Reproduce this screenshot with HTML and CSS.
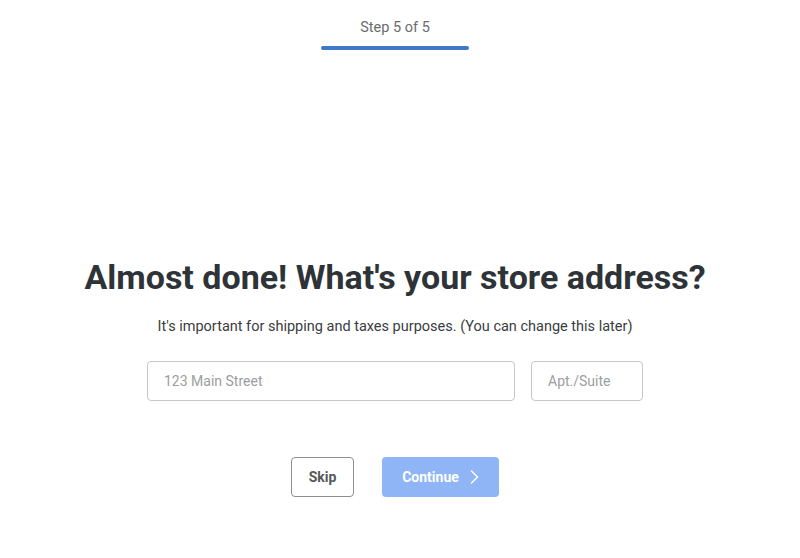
FILE: index.html
```html
<!DOCTYPE html>
<html>
<head>
<meta charset="utf-8">
<link rel="stylesheet" href="styles.css">
</head>
<body>
<div class="page">
  <header class="progress">
    <div class="step">Step 5 of 5</div>
    <div class="bar"></div>
  </header>
  <main class="content">
    <h1 class="title">Almost done! What's your store address?</h1>
    <p class="subtitle">It's important for shipping and taxes purposes. (You can change this later)</p>
    <div class="fields">
      <input class="field street" type="text" placeholder="123 Main Street">
      <input class="field apt" type="text" placeholder="Apt./Suite">
    </div>
    <div class="actions">
      <button class="btn skip">Skip</button>
      <button class="btn continue">Continue
        <svg class="chev" width="10" height="16" viewBox="0 0 10 16"><path d="M2.5 2l6 6-6 6" fill="none" stroke="#fff" stroke-width="1.5" stroke-linecap="round" stroke-linejoin="round"/></svg>
      </button>
    </div>
  </main>
</div>
</body>
</html>
```
FILE: styles.css
```css
* { box-sizing: border-box; }
html, body { margin: 0; padding: 0; background: #fff; }
body { font-family: "Roboto", "Liberation Sans", sans-serif; color: #2e3338; }
.page { width: 790px; height: 558px; display: flex; flex-direction: column; align-items: center; }
.progress { display: flex; flex-direction: column; align-items: center; padding-top: 19px; }
.step { font-size: 14.5px; color: #6a6d70; line-height: 18px; }
.bar { width: 148px; height: 4px; background: #3d78c9; border-radius: 2px; margin-top: 9px; }
.content { display: flex; flex-direction: column; align-items: center; padding-top: 207px; }
.title { margin: 0; font-size: 34px; font-weight: 700; line-height: 40px; letter-spacing: 0; color: #2e3338; }
.subtitle { margin: 21px 0 0; font-size: 14.5px; line-height: 18px; color: #3a3d40; }
.fields { display: flex; gap: 16px; margin-top: 25px; }
.field { height: 40px; border: 1px solid #c4c6c8; border-radius: 4px; padding: 0 16px; font-family: inherit; font-size: 14px; color: #333; outline: none; }
.field::placeholder { color: #9b9ea1; }
.street { width: 368px; }
.apt { width: 112px; }
.actions { display: flex; gap: 28px; margin-top: 56px; }
.btn { height: 40px; border-radius: 4px; font-family: inherit; font-size: 14px; font-weight: 700; display: flex; align-items: center; justify-content: center; }
.skip { width: 63px; background: #fff; border: 1px solid #8c8f92; color: #55585b; }
.continue { width: 117px; background: #8fb5f7; border: none; color: #fff; gap: 10px; }
```
